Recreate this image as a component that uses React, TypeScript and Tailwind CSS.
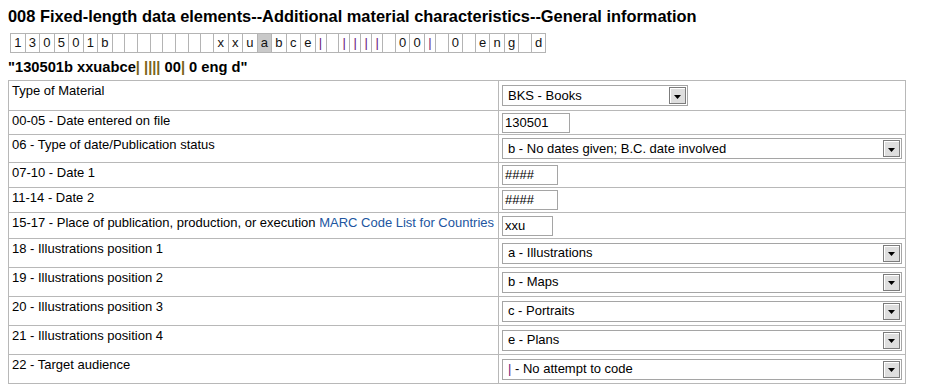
import React from 'react';

const RAW = '130501b        xxuabce| |||| 00| 0 eng d';

function charWidth(c: string) {
  if (c === ' ') return 'w-[12.7px]';
  if (c === '|') return 'w-[11px]';
  return 'w-[14.5px]';
}

function CharBoxes() {
  return (
    <div className="ml-[10px] mt-[8px] flex h-[20px] w-fit border-l border-y border-[#b4b4b4]">
      {RAW.split('').map((c, i) => (
        <div
          key={i}
          className={`${charWidth(c)} flex items-center justify-center border-r border-[#b4b4b4] text-[13px] ${
            i === 18 ? 'bg-[#c9c9c9]' : ''
          } ${c === '|' ? 'text-[#6b1a78]' : 'text-[#111]'}`}
        >
          {c === ' ' ? '\u00a0' : c}
        </div>
      ))}
    </div>
  );
}

function Select({ value, wide }: { value: React.ReactNode; wide?: boolean }) {
  return (
    <div
      className={`${
        wide ? 'w-[400px]' : 'w-[186px]'
      } flex h-[21px] items-center justify-between border border-[#a5a5a5] bg-white pl-[5px] pr-[1px] text-[13px]`}
    >
      <span>{value}</span>
      <span className="flex h-[17px] w-[17px] items-center justify-center border border-[#7c7c7c] bg-[#dedede] pt-[2px] shadow-[inset_1px_1px_0_#fff]">
        <svg width="7" height="4" viewBox="0 0 7 4">
          <path d="M0 0h7L3.5 4z" fill="#000" />
        </svg>
      </span>
    </div>
  );
}

function Field({ value, w }: { value: string; w: string }) {
  return (
    <div className={`${w} h-[20px] border border-[#a5a5a5] px-[2px] text-[13px] leading-[18px]`}>
      {value}
    </div>
  );
}

type Row = { label: React.ReactNode; control: React.ReactNode; h: string };

const rows: Row[] = [
  { label: 'Type of Material', control: <Select value="BKS - Books" />, h: 'h-[30px]' },
  { label: '00-05 - Date entered on file', control: <Field value="130501" w="w-[68px]" />, h: 'h-[24px]' },
  {
    label: '06 - Type of date/Publication status',
    control: <Select wide value="b - No dates given; B.C. date involved" />,
    h: 'h-[28px]',
  },
  { label: '07-10 - Date 1', control: <Field value="####" w="w-[56px]" />, h: 'h-[25px]' },
  { label: '11-14 - Date 2', control: <Field value="####" w="w-[56px]" />, h: 'h-[25px]' },
  {
    label: (
      <>
        15-17 - Place of publication, production, or execution{' '}
        <a className="text-[#2155a0]">MARC Code List for Countries</a>
      </>
    ),
    control: <Field value="xxu" w="w-[51px]" />,
    h: 'h-[26px]',
  },
  { label: '18 - Illustrations position 1', control: <Select wide value="a - Illustrations" />, h: 'h-[29px]' },
  { label: '19 - Illustrations position 2', control: <Select wide value="b - Maps" />, h: 'h-[29px]' },
  { label: '20 - Illustrations position 3', control: <Select wide value="c - Portraits" />, h: 'h-[29px]' },
  { label: '21 - Illustrations position 4', control: <Select wide value="e - Plans" />, h: 'h-[29px]' },
  {
    label: '22 - Target audience',
    control: (
      <Select
        wide
        value={
          <>
            <span className="text-[#6b1a78]">|</span> - No attempt to code
          </>
        }
      />
    ),
    h: 'h-[29px]',
  },
];

export default function App() {
  return (
    <div className="min-h-screen bg-white text-black font-['Liberation_Sans',Arial,sans-serif]">
      <h1 className="ml-2 pt-[7px] text-[16.4px] font-bold leading-[18px]">
        008 Fixed-length data elements--Additional material characteristics--General information
      </h1>
      <CharBoxes />
      <div className="ml-2 mt-[5px] text-[14.7px] font-bold leading-[18px]">
        "130501b xxuabce<span className="text-[#7a6418]">|</span>{' '}
        <span className="text-[#7a6418]">||||</span> 00<span className="text-[#7a6418]">|</span> 0 eng d"
      </div>
      <table className="ml-2 mt-[4px] w-[898px] border-collapse text-[13px]">
        <tbody>
          {rows.map((r, i) => (
            <tr key={i} className={r.h}>
              <td className="w-[490px] border border-[#b8b8b8] px-[3px] pt-[2px] align-top leading-[15px]">
                {r.label}
              </td>
              <td className="border border-[#b8b8b8] px-[3px] align-middle">{r.control}</td>
            </tr>
          ))}
        </tbody>
      </table>
    </div>
  );
}
